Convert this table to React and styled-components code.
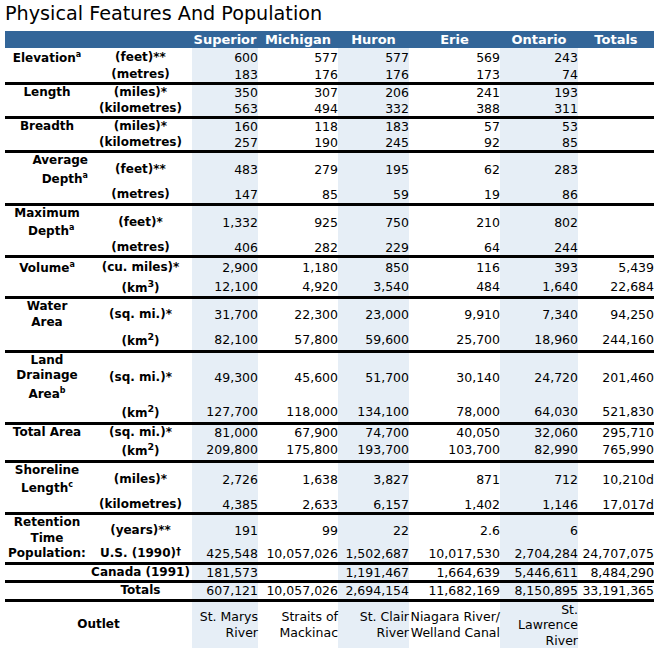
import React from "react";
import styled, { createGlobalStyle } from "styled-components";

const GlobalStyle = createGlobalStyle`
  html, body { margin: 0; padding: 0; background: #ffffff; }
  body { font-family: "DejaVu Sans", Verdana, sans-serif; color: #000; }
`;

const Page = styled.div`
  padding: 3px 0 0 5px;
  width: 660px;
  box-sizing: border-box;
`;

const Title = styled.h1`
  margin: 0 0 6px;
  font-family: "DejaVu Sans", Verdana, sans-serif;
  font-weight: normal;
  font-size: 19.2px;
  line-height: 22px;
  color: #000;
`;

const Table = styled.table`
  border-collapse: separate;
  border-spacing: 0;
  table-layout: fixed;
  width: 649px;
  font-family: "DejaVu Sans", Verdana, sans-serif;
`;

const HeadCell = styled.th`
  background: #336699;
  color: #ffffff;
  font-size: 13px;
  font-weight: bold;
  line-height: 17px;
  height: 17px;
  padding: 0;
  text-align: center;
  white-space: nowrap;
`;

const Cell = styled.td`
  padding: 0;
  line-height: 15.5px;
  vertical-align: middle;
  border-bottom: ${(p) => (p.$end ? "3px solid #000" : "0 none")};
  background: ${(p) => (p.$shade ? "#e6eef6" : "transparent")};
`;

const LabelCell = styled(Cell)`
  font-size: 12px;
  font-weight: bold;
  text-align: ${(p) => p.$align || "center"};
  padding-right: ${(p) => (p.$align === "right" ? "1px" : "0")};
`;

const UnitCell = styled(Cell)`
  font-size: 12px;
  font-weight: bold;
  text-align: center;
  white-space: nowrap;
`;

const NumCell = styled(Cell)`
  font-size: 12.5px;
  font-weight: normal;
  text-align: right;
  white-space: ${(p) => (p.$wrap ? "normal" : "nowrap")};
`;

const Sup = styled.sup`
  font-size: ${(p) => (p.$big ? "9.5px" : "8px")};
  line-height: 14.5px;
  vertical-align: super;
`;

const Dagger = styled.span`
  font-size: 10px;
  line-height: 1;
  vertical-align: 2px;
`;

const COLS = [84, 103, 66, 80, 71, 91, 78, 76];
const LAKES = ["Superior", "Michigan", "Huron", "Erie", "Ontario", "Totals"];
const SHADED = [true, false, true, false, true, false];

const KM2 = <>(km<Sup $big>2</Sup>)</>;

const rows = [
  { label: <>Elevation<Sup>a</Sup></>, unit: "(feet)**", vals: ["600", "577", "577", "569", "243", ""] },
  { unit: "(metres)", vals: ["183", "176", "176", "173", "74", ""], end: true },
  { label: "Length", unit: "(miles)*", vals: ["350", "307", "206", "241", "193", ""] },
  { unit: "(kilometres)", vals: ["563", "494", "332", "388", "311", ""], end: true },
  { label: "Breadth", unit: "(miles)*", vals: ["160", "118", "183", "57", "53", ""] },
  { unit: "(kilometres)", vals: ["257", "190", "245", "92", "85", ""], end: true },
  {
    label: <>Average<br />Depth<Sup>a</Sup></>,
    align: "right",
    unit: "(feet)**",
    vals: ["483", "279", "195", "62", "283", ""],
  },
  { unit: "(metres)", vals: ["147", "85", "59", "19", "86", ""], end: true },
  {
    label: <>Maximum<br />{"\u00a0\u00a0"}Depth<Sup>a</Sup></>,
    unit: "(feet)*",
    vals: ["1,332", "925", "750", "210", "802", ""],
  },
  { unit: "(metres)", vals: ["406", "282", "229", "64", "244", ""], end: true },
  { label: <>Volume<Sup>a</Sup></>, unit: "(cu. miles)*", vals: ["2,900", "1,180", "850", "116", "393", "5,439"] },
  { unit: <>(km<Sup $big>3</Sup>)</>, vals: ["12,100", "4,920", "3,540", "484", "1,640", "22,684"], end: true },
  { label: <>Water<br />Area</>, unit: "(sq. mi.)*", vals: ["31,700", "22,300", "23,000", "9,910", "7,340", "94,250"] },
  { unit: KM2, vals: ["82,100", "57,800", "59,600", "25,700", "18,960", "244,160"], end: true },
  {
    label: <>Land<br />Drainage<br />Area<Sup>b</Sup></>,
    unit: "(sq. mi.)*",
    vals: ["49,300", "45,600", "51,700", "30,140", "24,720", "201,460"],
  },
  { unit: KM2, vals: ["127,700", "118,000", "134,100", "78,000", "64,030", "521,830"], end: true },
  { label: "Total Area", unit: "(sq. mi.)*", vals: ["81,000", "67,900", "74,700", "40,050", "32,060", "295,710"] },
  { unit: KM2, vals: ["209,800", "175,800", "193,700", "103,700", "82,990", "765,990"], end: true },
  {
    label: <>Shoreline<br />Length<Sup>c</Sup></>,
    unit: "(miles)*",
    vals: ["2,726", "1,638", "3,827", "871", "712", "10,210d"],
  },
  { unit: "(kilometres)", vals: ["4,385", "2,633", "6,157", "1,402", "1,146", "17,017d"], end: true },
  { label: <>Retention<br />Time</>, unit: "(years)**", vals: ["191", "99", "22", "2.6", "6", ""] },
  {
    label: "Population:",
    unit: <>U.S. (1990)<Dagger>†</Dagger></>,
    vals: ["425,548", "10,057,026", "1,502,687", "10,017,530", "2,704,284", "24,707,075"],
    end: true,
  },
  { unit: "Canada (1991)", vals: ["181,573", "", "1,191,467", "1,664,639", "5,446,611", "8,484,290"], end: true },
  { unit: "Totals", vals: ["607,121", "10,057,026", "2,694,154", "11,682,169", "8,150,895", "33,191,365"], end: true },
];

const OUTLETS = [
  "St. Marys River",
  "Straits of Mackinac",
  "St. Clair River",
  "Niagara River/ Welland Canal",
  "St. Lawrence River",
  "",
];

export default function App() {
  return (
    <>
      <GlobalStyle />
      <Page>
        <Title>Physical Features And Population</Title>
        <Table>
          <colgroup>
            {COLS.map((w, i) => (
              <col key={i} style={{ width: w }} />
            ))}
          </colgroup>
          <thead>
            <tr>
              <HeadCell />
              <HeadCell />
              {LAKES.map((l) => (
                <HeadCell key={l}>{l}</HeadCell>
              ))}
            </tr>
          </thead>
          <tbody>
            {rows.map((r, i) => (
              <tr key={i}>
                <LabelCell $end={r.end} $align={r.align}>
                  {r.label || ""}
                </LabelCell>
                <UnitCell $end={r.end}>{r.unit}</UnitCell>
                {r.vals.map((v, j) => (
                  <NumCell key={j} $end={r.end} $shade={SHADED[j]}>
                    {v}
                  </NumCell>
                ))}
              </tr>
            ))}
            <tr>
              <LabelCell colSpan={2}>Outlet</LabelCell>
              {OUTLETS.map((o, j) => (
                <NumCell key={j} $wrap $shade={SHADED[j]}>
                  {o}
                </NumCell>
              ))}
            </tr>
          </tbody>
        </Table>
      </Page>
    </>
  );
}
